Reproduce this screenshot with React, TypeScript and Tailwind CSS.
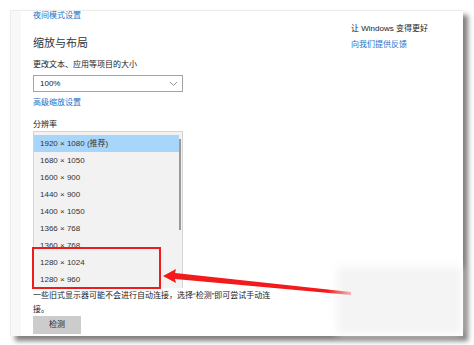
import React from "react";

const resolutions = [
  "1920 × 1080 (推荐)",
  "1680 × 1050",
  "1600 × 900",
  "1440 × 900",
  "1400 × 1050",
  "1366 × 768",
  "1360 × 768",
  "1280 × 1024",
  "1280 × 960",
];

export default function App() {
  return (
    <div className="w-[474px] h-[345px] bg-white overflow-hidden pt-[10px] pl-[10px] font-['Liberation_Sans','Noto_Sans_CJK_SC',sans-serif] text-[#222]">
      <div className="relative w-[453px] h-[326px] bg-white flex border-l border-t border-[#ececec] shadow-[5px_5px_5px_rgba(0,0,0,0.5)]">
        <div className="w-[10px] bg-[#f8f8f8]" />
        <div className="flex-1 flex pl-[12px]">
          <div className="w-[150px] flex flex-col">
            <div className="h-[12px] leading-[12px] text-[8px] text-[#1a73c8] -mt-[1px]">夜间模式设置</div>
            <div className="mt-[13px] h-[16px] leading-[16px] text-[11px] text-[#333]">缩放与布局</div>
            <div className="mt-[8px] h-[12px] leading-[12px] text-[8px]">更改文本、应用等项目的大小</div>
            <div className="mt-[4px] h-[17px] border border-[#a4a4a4] flex items-center justify-between pl-[6px] pr-[4px]">
              <span className="text-[8px]">100%</span>
              <svg width="9" height="6" viewBox="0 0 9 6" fill="none">
                <path d="M1 1l3.5 3.5L8 1" stroke="#888" strokeWidth="0.9" />
              </svg>
            </div>
            <div className="mt-[5px] h-[12px] leading-[12px] text-[8px] text-[#1a73c8]">高级缩放设置</div>
            <div className="mt-[10px] h-[12px] leading-[12px] text-[8px]">分辨率</div>
            <div className="relative h-[157px] border-t border-l border-r border-[#d4d4d4] bg-[#f2f2f2] pt-[3px] overflow-visible">
              <div className="overflow-hidden h-[153px]">
                {resolutions.map((r, i) => (
                  <div
                    key={r}
                    className={`h-[17px] flex items-center pl-[6px] mr-[3px] text-[8px] text-[#333] ${i === 0 ? "bg-[#a8d6fb]" : ""}`}
                  >
                    {r}
                  </div>
                ))}
              </div>
              <div className="absolute right-[1px] top-[7px] w-[2px] h-[91px] bg-[#9a9a9a]" />
              <div className="absolute left-[-2px] top-[115px] w-[129px] h-[42px] border-2 border-[#ee1c1c]" />
            </div>
            <div className="mt-[1px] w-[260px] text-[8px] leading-[14px]">
              一些旧式显示器可能不会进行自动连接，选择“检测”即可尝试手动连
              <br />
              接。
            </div>
            <div className="mt-[-1px] w-[48px] h-[18px] bg-[#cccccc] flex items-center justify-center text-[8px]">检测</div>
          </div>
          <div className="flex-1" />
          <div className="w-[112px] flex flex-col pt-[12px]">
            <div className="h-[12px] leading-[12px] text-[8px]">让 Windows 变得更好</div>
            <div className="mt-[4px] h-[12px] leading-[12px] text-[8px] text-[#1a73c8]">向我们提供反馈</div>
          </div>
        </div>
        <div className="absolute left-[326px] top-[256px] w-[124px] h-[67px] bg-[#f4f4f4] blur-[4px]" />
        <svg className="absolute left-0 top-0" width="453" height="326" viewBox="0 0 453 326">
          <defs>
            <linearGradient id="fade" x1="152" y1="0" x2="345" y2="0" gradientUnits="userSpaceOnUse">
              <stop offset="0.85" stopColor="#f21a1a" stopOpacity="1" />
              <stop offset="1" stopColor="#f21a1a" stopOpacity="0.15" />
            </linearGradient>
          </defs>
          <polygon points="152,265 165,258 164,262 340,281 340,284 164,268 165,272" fill="url(#fade)" />
        </svg>
      </div>
    </div>
  );
}
